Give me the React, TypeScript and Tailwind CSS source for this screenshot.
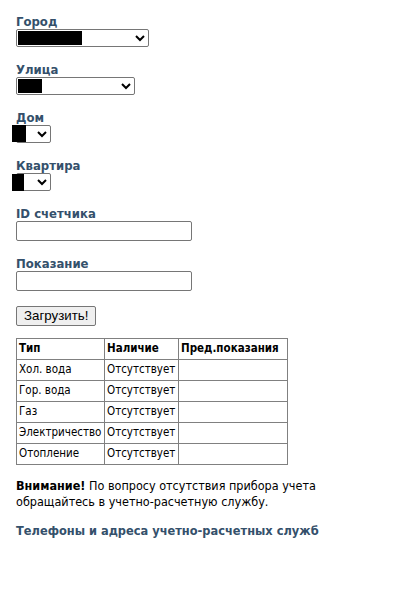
import React from "react";

const font = { fontFamily: '"DejaVu Sans Condensed", "DejaVu Sans", Tahoma, sans-serif' };

function Field({ label, children }: { label: string; children: React.ReactNode }) {
  return (
    <div className="mb-[15px]">
      <div className="text-[13px] font-bold leading-[15px] text-[#34506b]">{label}</div>
      {children}
    </div>
  );
}

function Select({ w, mark }: { w: string; mark: React.ReactNode }) {
  return (
    <div className={`relative ${w}`}>
      <select className={`block h-[18px] ${w} rounded-[2px] border border-[#767676] bg-white text-[12px] leading-none`}>
        <option>&nbsp;</option>
      </select>
      {mark}
    </div>
  );
}

const rows = ["Хол. вода", "Гор. вода", "Газ", "Электричество", "Отопление"];

export default function App() {
  return (
    <div className="min-h-[614px] bg-white px-[16px] pt-[14px] text-black" style={font}>
      <Field label="Город">
        <Select
          w="w-[133px]"
          mark={<span className="pointer-events-none absolute top-[2px] left-[2px] h-[14px] w-[64px] bg-black" />}
        />
      </Field>
      <Field label="Улица">
        <Select
          w="w-[119px]"
          mark={<span className="pointer-events-none absolute top-[2px] left-[2px] h-[14px] w-[24px] bg-black" />}
        />
      </Field>
      <Field label="Дом">
        <Select
          w="w-[35px]"
          mark={<span className="pointer-events-none absolute top-[0px] left-[-4px] h-[17px] w-[14px] bg-black" />}
        />
      </Field>
      <Field label="Квартира">
        <Select
          w="w-[35px]"
          mark={<span className="pointer-events-none absolute top-[1px] left-[-4px] h-[17px] w-[12px] bg-black" />}
        />
      </Field>
      <Field label="ID счетчика">
        <input className="block h-[20px] w-[176px] rounded-[2px] border border-[#767676] bg-white" />
      </Field>
      <Field label="Показание">
        <input className="block h-[20px] w-[176px] rounded-[2px] border border-[#767676] bg-white" />
      </Field>
      <button
        className="block h-[20px] rounded-[2px] border border-[#767676] bg-[#efefef] px-[7px] text-[13.3px] leading-none"
        style={{ fontFamily: '"Liberation Sans", Arial, sans-serif' }}
      >
        Загрузить!
      </button>

      <table className="mt-[12px] border-collapse border border-[#808080] text-[11.5px]">
        <thead>
          <tr className="h-[21px]">
            <th className="w-[88px] border border-[#808080] px-[2px] text-left font-bold">Тип</th>
            <th className="w-[74px] border border-[#808080] px-[2px] text-left font-bold">Наличие</th>
            <th className="w-[109px] border border-[#808080] px-[2px] text-left font-bold">Пред.показания</th>
          </tr>
        </thead>
        <tbody>
          {rows.map((r) => (
            <tr key={r} className="h-[21px]">
              <td className="border border-[#808080] px-[2px]">{r}</td>
              <td className="border border-[#808080] px-[2px]">Отсутствует</td>
              <td className="border border-[#808080] px-[2px]"></td>
            </tr>
          ))}
        </tbody>
      </table>

      <p className="mt-[13px] w-[310px] text-[12.5px] leading-[16px]">
        <b>Внимание!</b> По вопросу отсутствия прибора учета обращайтесь в учетно-расчетную службу.
      </p>
      <p className="mt-[13px] text-[12.7px] font-bold leading-[16px] text-[#34506b]">
        Телефоны и адреса учетно-расчетных служб
      </p>
    </div>
  );
}
